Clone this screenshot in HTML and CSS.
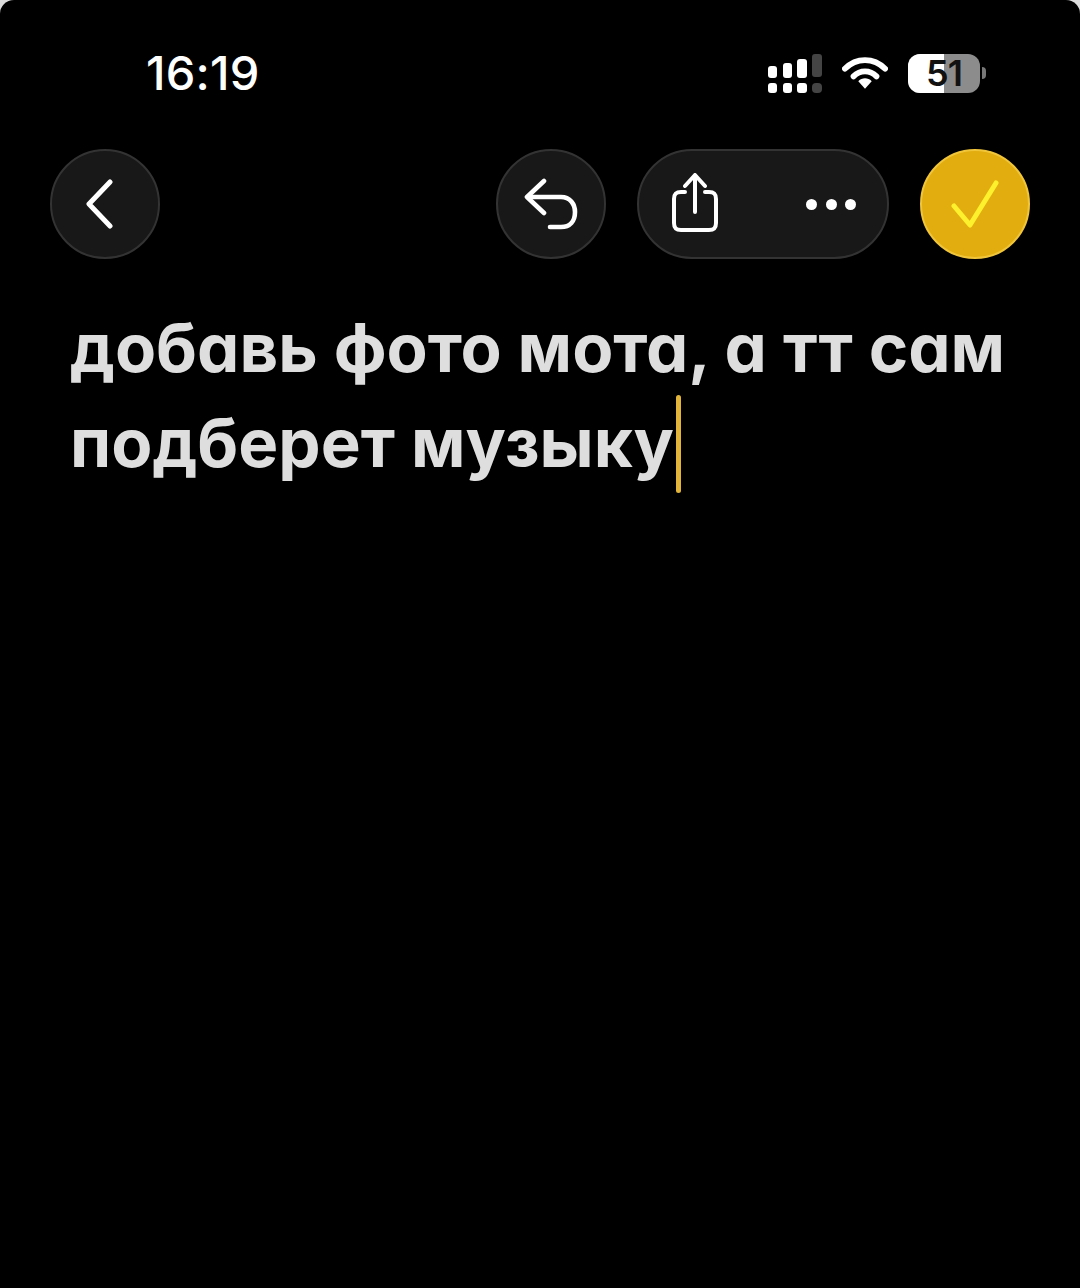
FILE: index.html
```html
<!DOCTYPE html>
<html>

<head>
    <title>Заметка</title>
    <link rel="stylesheet" href="styles.css">
</head>

<body>
    <div id="screen">
        <div id="status-bar">
            <span class="time">16:19</span>
            <div class="status-icons">
                <svg class="signal" width="54" height="39" viewBox="0 0 54 39">
                    <rect x="0" y="12" width="9" height="12" rx="3" fill="#fff" />
                    <rect x="15" y="9" width="9" height="15" rx="3" fill="#fff" />
                    <rect x="29" y="5" width="10" height="19" rx="3" fill="#fff" />
                    <rect x="44" y="0" width="10" height="23" rx="3" fill="#444" />
                    <rect x="0" y="29" width="9" height="10" rx="3" fill="#fff" />
                    <rect x="15" y="29" width="9" height="10" rx="3" fill="#fff" />
                    <rect x="29" y="29" width="10" height="10" rx="3" fill="#fff" />
                    <rect x="44" y="29" width="10" height="10" rx="4" fill="#444" />
                </svg>
                <svg class="wifi" width="46" height="35" viewBox="0 0 48 36">
                    <path d="M3 13 C15 1 33 1 45 13" fill="none" stroke="#fff" stroke-width="6" stroke-linecap="round" />
                    <path d="M12 21 C19 14 29 14 36 21" fill="none" stroke="#fff" stroke-width="6" stroke-linecap="round" />
                    <path d="M17 26 C21 22 27 22 31 26 L24 34 Z" fill="#fff" />
                </svg>
                <div class="battery">
                    <div class="battery-body">
                        <div class="battery-fill"></div>
                        <span class="battery-level">51</span>
                    </div>
                    <div class="battery-tip"></div>
                </div>
            </div>
        </div>

        <div id="toolbar">
            <button class="round-btn">
                <svg class="icon-back" width="36" height="50" viewBox="0 0 36 50">
                    <path d="M28 3 L7 25 L28 47" fill="none" stroke="#fff" stroke-width="5" stroke-linecap="round" stroke-linejoin="round" />
                </svg>
            </button>
            <div class="toolbar-right">
                <button class="round-btn">
                    <svg width="54" height="52" viewBox="0 0 54 52">
                        <path d="M20 3 L3 19 L20 35" fill="none" stroke="#fff" stroke-width="4.6" stroke-linecap="round" stroke-linejoin="round" />
                        <path d="M4 19 H37 C46 19 51 26 51 34 C51 43 46 49 37 49 H26" fill="none" stroke="#fff" stroke-width="4.6" stroke-linecap="round" />
                    </svg>
                </button>
                <div class="pill">
                    <svg width="50" height="62" viewBox="0 0 50 62">
                        <path d="M15 19 H11 C6 19 4 21 4 26 V50 C4 55 6 57 11 57 H39 C44 57 46 55 46 50 V26 C46 21 44 19 39 19 H35" fill="none" stroke="#fff" stroke-width="4" stroke-linecap="round" />
                        <path d="M25 39 V3 M15 13 L25 2 L35 13" fill="none" stroke="#fff" stroke-width="4" stroke-linecap="round" stroke-linejoin="round" />
                    </svg>
                    <div class="dots">
                        <span class="dot"></span>
                        <span class="dot"></span>
                        <span class="dot"></span>
                    </div>
                </div>
                <button class="round-btn round-btn-done">
                    <svg width="48" height="50" viewBox="0 0 48 50">
                        <path d="M3 27 L19 46 L45 4" fill="none" stroke="#fdf02c" stroke-width="5" stroke-linecap="round" stroke-linejoin="round" />
                    </svg>
                </button>
            </div>
        </div>

        <div id="note">
            <p>добавь фото мота, а тт сам<br>подберет музыку<span class="cursor"></span></p>
        </div>
    </div>
</body>

</html>
```

FILE: styles.css
```css
html {
    background-color: #dcdcdc;
}

body {
    margin: 0;
    padding: 0;
}

#screen {
    background-color: #000;
    height: 1288px;
    border-radius: 14px 14px 0 0;
    overflow: hidden;
    font-family: Inter, "Liberation Sans", sans-serif;
    color: #fff;
}

#status-bar {
    display: flex;
    justify-content: space-between;
    align-items: center;
    height: 50px;
    padding: 48px 94px 0 146px;
}

.time {
    margin-top: -2px;
    font-size: 47px;
    font-weight: 500;
    letter-spacing: 0.2px;
}

.status-icons {
    display: flex;
    align-items: center;
    gap: 20px;
}

.battery {
    display: flex;
    align-items: center;
    gap: 2px;
}

.battery-body {
    position: relative;
    width: 72px;
    height: 39px;
    border-radius: 12px;
    background-color: #8c8c8c;
    display: flex;
    align-items: center;
    justify-content: center;
}

.battery-fill {
    position: absolute;
    left: 0;
    top: 0;
    bottom: 0;
    width: 36px;
    border-radius: 12px 0 0 12px;
    background-color: #fff;
}

.battery-level {
    position: relative;
    color: #111;
    font-size: 36px;
    font-weight: 600;
    line-height: 36px;
    letter-spacing: -1px;
}

.battery-tip {
    width: 4px;
    height: 12px;
    background-color: #777;
    border-radius: 0 6px 6px 0;
}

#toolbar {
    display: flex;
    justify-content: space-between;
    padding: 51px 50px 0 50px;
}

.toolbar-right {
    display: flex;
    gap: 31px;
}

.round-btn {
    display: flex;
    align-items: center;
    justify-content: center;
    width: 110px;
    height: 110px;
    padding: 0;
    border: 2px solid #333;
    border-radius: 50%;
    background-color: #181818;
}

.round-btn-done {
    background-color: #e2ad0f;
    border-color: #f0c53a;
}

.icon-back {
    margin-right: 10px;
}

.pill {
    display: flex;
    align-items: center;
    justify-content: space-between;
    box-sizing: border-box;
    width: 252px;
    height: 110px;
    padding: 0 31px 0 31px;
    border: 2px solid #333;
    border-radius: 55px;
    background-color: #181818;
}

.dots {
    display: flex;
    gap: 8.5px;
}

.dot {
    width: 11px;
    height: 11px;
    border-radius: 50%;
    background-color: #fff;
}

#note {
    padding: 42px 0 0 70px;
}

#note p {
    margin: 0;
    font-size: 67.2px;
    font-weight: 700;
    line-height: 94px;
    color: #dedede;
    white-space: nowrap;
    font-feature-settings: "cv11";
}

.cursor {
    display: inline-block;
    width: 5px;
    height: 98px;
    margin-left: 2px;
    vertical-align: -26px;
    border-radius: 3px;
    background-color: #e2b53a;
}
```
